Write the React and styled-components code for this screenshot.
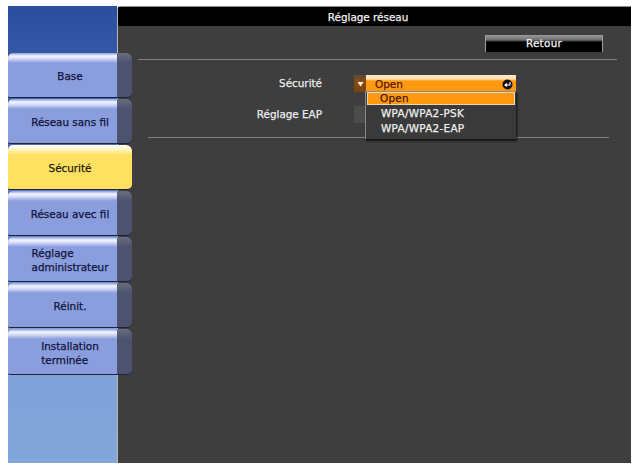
import React from "react";
import styled, { createGlobalStyle } from "styled-components";

const Global = createGlobalStyle`
  html, body { margin: 0; padding: 0; background: #fff; }
  body {
    font-family: "DejaVu Sans", "Liberation Sans", sans-serif;
    -webkit-text-stroke: 0.25px currentColor;
  }
`;

const Screen = styled.div`
  width: 634px;
  height: 465px;
  box-sizing: border-box;
  padding: 6px 3px 2px 8px;
  display: flex;
  overflow: hidden;
`;

const Sidebar = styled.nav`
  width: 109px;
  flex: none;
  padding-top: 47px;
  box-sizing: border-box;
  display: flex;
  flex-direction: column;
  gap: 1px;
  background: linear-gradient(180deg, #2c4e9f 0%, #3f63ae 22%, #7da0d8 70%, #82a5da 100%);
  position: relative;
  z-index: 2;
`;

const NavButton = styled.div`
  width: 124px;
  height: ${(p) => p.$h || 45}px;
  box-sizing: border-box;
  flex: none;
  display: flex;
  align-items: center;
  justify-content: center;
  padding-top: 2px;
  font-size: 10.4px;
  line-height: 14px;
  color: ${(p) => (p.$active ? "#1a1a10" : "#10143c")};
  border-radius: 5px 6px 5px 2px;
  border-bottom: 1px solid #1c2440;
  background-repeat: no-repeat;
  background-position: left top;
  background-image: ${(p) =>
    p.$active
      ? "linear-gradient(180deg, #fff 0, #fff6c8 4px, #ffe060 10px, #ffe060 100%)"
      : `linear-gradient(180deg, #8a9ddd 0, #f4f6ff 3px, #cfd6f4 6px, #8a9ddd 10px, #8a9ddd 100%),
         linear-gradient(180deg, #6a6e80 0, #4c5270 10px, #4c5270 100%)`};
  background-size: ${(p) => (p.$active ? "100% 100%" : "109px 100%, 100% 100%")};
`;

const NavLabel = styled.span`
  display: block;
  text-align: left;
`;

const Panel = styled.main`
  flex: 1;
  display: flex;
  flex-direction: column;
  background: #3e3e3e;
  border-top: 1px solid #8a8a8a;
  border-left: 1px solid #b8b8b8;
  border-top-left-radius: 4px;
`;

const TitleBar = styled.header`
  height: 19px;
  background: #000;
  color: #f0f0f0;
  font-size: 10.4px;
  display: flex;
  align-items: center;
  justify-content: center;
  padding-right: 13px;
  flex: none;
`;

const Actions = styled.div`
  display: flex;
  justify-content: flex-end;
  padding: 9px 28px 0 0;
`;

const BackButton = styled.div`
  width: 118px;
  height: 17px;
  box-sizing: border-box;
  display: flex;
  align-items: center;
  justify-content: center;
  padding-bottom: 1px;
  color: #f4f4f4;
  font-size: 10.4px;
  letter-spacing: 0.3px;
  border-left: 1px solid #a0a0a0;
  border-right: 1px solid #a0a0a0;
  background: linear-gradient(180deg, #9a9a9a 0, #707070 5px, #000 7px, #000 100%);
`;

const Rule = styled.hr`
  border: 0;
  height: 1px;
  background: #808080;
  margin: ${(p) => p.$m};
  flex: none;
`;

const Form = styled.section`
  position: relative;
  display: flex;
  flex-direction: column;
  gap: 14px;
  padding: 15px 0 0 0;
`;

const Row = styled.div`
  display: flex;
  align-items: center;
  height: 17px;
`;

const Label = styled.span`
  width: 204px;
  flex: none;
  box-sizing: border-box;
  padding-bottom: 2px;
  text-align: right;
  color: #ececec;
  font-size: 10.4px;
`;

const ArrowBox = styled.span`
  width: 12px;
  height: 17px;
  margin-left: 32px;
  flex: none;
  display: flex;
  align-items: center;
  justify-content: center;
  background: ${(p) =>
    p.$on ? "linear-gradient(180deg, #5a4a3c 0, #8a4a10 35%, #7a4210 100%)" : "#4c4c4c"};
`;

const SelectBox = styled.div`
  width: 150px;
  height: 17px;
  box-sizing: border-box;
  flex: none;
  display: flex;
  align-items: center;
  justify-content: space-between;
  padding: 1px 3px 0 9px;
  color: #5a1800;
  font-size: 10.4px;
  background: linear-gradient(180deg, #ffe8c8 0, #ffe0b0 4px, #ff9a10 6px, #ff9a10 100%);
`;

const Menu = styled.ul`
  position: absolute;
  left: 247px;
  top: 31px;
  width: 151px;
  height: 48px;
  box-sizing: border-box;
  margin: 0;
  padding: 0 1px;
  list-style: none;
  background: #3a3a3a;
  border-left: 1px solid #8c8c8c;
  border-top: 1px solid #8c8c8c;
  box-shadow: 1px 2px 2px #111;
`;

const MenuItem = styled.li`
  height: ${(p) => (p.$active ? 13 : 15)}px;
  display: flex;
  align-items: center;
  padding-left: ${(p) => (p.$active ? 12 : 14)}px;
  padding-bottom: ${(p) => (p.$active ? 1 : 0)}px;
  font-size: 10.4px;
  letter-spacing: 0.3px;
  color: ${(p) => (p.$active ? "#4a1800" : "#f0f0f0")};
  background: ${(p) => (p.$active ? "#ff9a10" : "transparent")};
  border: ${(p) => (p.$active ? "1px solid #e8d8b8" : "0")};
  box-sizing: border-box;
`;

const items = [
  { t: ["Base"] },
  { t: ["Réseau sans fil"] },
  { t: ["Sécurité"], active: true },
  { t: ["Réseau avec fil"] },
  { t: ["Réglage", "administrateur"] },
  { t: ["Réinit."] },
  { t: ["Installation", "terminée"], h: 46 },
];

export default function App() {
  return (
    <>
      <Global />
      <Screen>
        <Sidebar>
          {items.map((it, i) => (
            <NavButton key={i} $active={it.active} $h={it.h}>
              <NavLabel>
                {it.t[0]}
                {it.t[1] && <br />}
                {it.t[1]}
              </NavLabel>
            </NavButton>
          ))}
        </Sidebar>
        <Panel>
          <TitleBar>Réglage réseau</TitleBar>
          <Actions>
            <BackButton>Retour</BackButton>
          </Actions>
          <Rule $m="7px 14px 0 20px" />
          <Form>
            <Row>
              <Label>Sécurité</Label>
              <ArrowBox $on>
                <svg width="7" height="6" viewBox="0 0 7 6">
                  <path d="M0.5 1h6L3.5 5.5z" fill="#fff" />
                </svg>
              </ArrowBox>
              <SelectBox>
                Open
                <svg width="11" height="11" viewBox="0 0 11 11">
                  <circle cx="5.5" cy="5.5" r="5" fill="#111" />
                  <path d="M8 3v3H3.5M5 4.5L3 6l2 1.5" stroke="#fff" strokeWidth="1.1" fill="none" />
                </svg>
              </SelectBox>
            </Row>
            <Row>
              <Label>Réglage EAP</Label>
              <ArrowBox />
            </Row>
            <Menu>
              <MenuItem $active>Open</MenuItem>
              <MenuItem>WPA/WPA2-PSK</MenuItem>
              <MenuItem>WPA/WPA2-EAP</MenuItem>
            </Menu>
          </Form>
          <Rule $m="14px 22px 0 30px" />
        </Panel>
      </Screen>
    </>
  );
}
